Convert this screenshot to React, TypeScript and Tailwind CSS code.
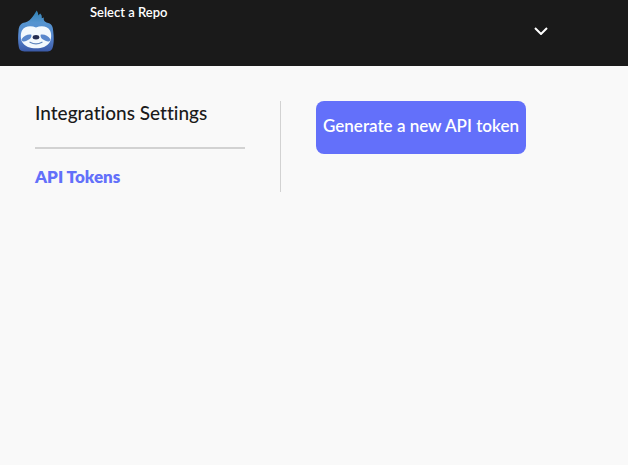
import React from "react";

function SlothLogo() {
  return (
    <svg viewBox="0 0 36 42" className="h-[42px] w-9" aria-hidden="true">
      <defs>
        <linearGradient id="fur" x1="0" y1="0" x2="0" y2="1">
          <stop offset="0" stopColor="#2f80b2" />
          <stop offset="0.3" stopColor="#5595d0" />
          <stop offset="0.65" stopColor="#5685ce" />
          <stop offset="1" stopColor="#3a59a6" />
        </linearGradient>
      </defs>
      <path
        d="M7 12.5C11 12 15 7 18.7 0.5C20 2.5 20.4 4 20.2 5.5L22.2 3.5C24.2 5.5 23.8 7 23.7 8.2L26 7.5C25.2 9.5 26 11.5 28.5 12.5C33.5 13.5 35 16 35.2 21C36 28 36 34 34.5 38C33.5 41 31 41.5 27 41.5H8C3.5 41.5 1.5 40.5 0.8 37C-0.2 32 0 26 0.5 21C0.8 15.5 3 13 7 12.5Z"
        fill="url(#fur)"
      />
      <path
        d="M18 17.6C23 15.4 29.5 16 32 20.5C33.6 23.3 33.6 29 31.7 32.3C29 36.7 24 38.3 18 38.3C12 38.3 7 36.7 4.3 32.3C2.4 29 2.4 23.3 4 20.5C6.5 16 13 15.4 18 17.6Z"
        fill="#f3f9fd"
      />
      <path d="M13.4 24.8C10.5 23.8 5.6 25.8 3.6 29.2C3.6 32 6.4 32 8.6 30.8C11 29.4 13.8 28.6 13.4 24.8Z" fill="#5a88cc" />
      <path d="M22.6 24.8C25.5 23.8 30.4 25.8 32.4 29.2C32.4 32 29.6 32 27.4 30.8C25 29.4 22.2 28.6 22.6 24.8Z" fill="#5a88cc" />
      <ellipse cx="18" cy="27.2" rx="3.3" ry="2.2" fill="#252d50" />
      <path d="M12 32.2Q18 35.6 24 32.2" fill="none" stroke="#5f86bd" strokeWidth="1.2" strokeLinecap="round" />
    </svg>
  );
}

function Header() {
  return (
    <header className="flex h-[66px] items-start bg-[#1a1a1a] pl-[18px] text-white">
      <a href="#" aria-label="Home" className="mt-2.5 shrink-0">
        <SlothLogo />
      </a>
      <button type="button" className="ml-9 flex h-full w-[458px] items-start justify-between text-left">
        <span className="text-[13px] leading-6 font-semibold">Select a Repo</span>
        <svg viewBox="0 0 14 8" className="mt-[27px] h-2 w-3.5" aria-hidden="true">
          <path d="M1 1L7 7L13 1" fill="none" stroke="currentColor" strokeWidth="2" />
        </svg>
      </button>
    </header>
  );
}

export default function App() {
  return (
    <div className="min-h-screen bg-[#f9f9f9] font-['Lato',sans-serif] text-[#1a1a1a] [font-variant-ligatures:none]">
      <Header />
      <main className="flex items-start gap-[35px] p-[35px]">
        <aside className="border-r border-[#d2d2d2] pr-[35px]">
          <div className="w-[210px]">
            <h1 className="border-b-2 border-[#d2d2d2] pb-[22px] text-[19px] leading-6 font-medium">
              Integrations Settings
            </h1>
            <nav className="pt-4 pb-[3px]">
              <a href="#" className="block text-[17px] leading-6 font-extrabold text-[#6370fa]">
                API Tokens
              </a>
            </nav>
          </div>
        </aside>
        <button
          type="button"
          className="h-[53px] w-[210px] rounded-lg bg-[#6370fa] pb-1 text-[17px] leading-6 font-semibold whitespace-nowrap text-white"
        >
          Generate a new API token
        </button>
      </main>
    </div>
  );
}
